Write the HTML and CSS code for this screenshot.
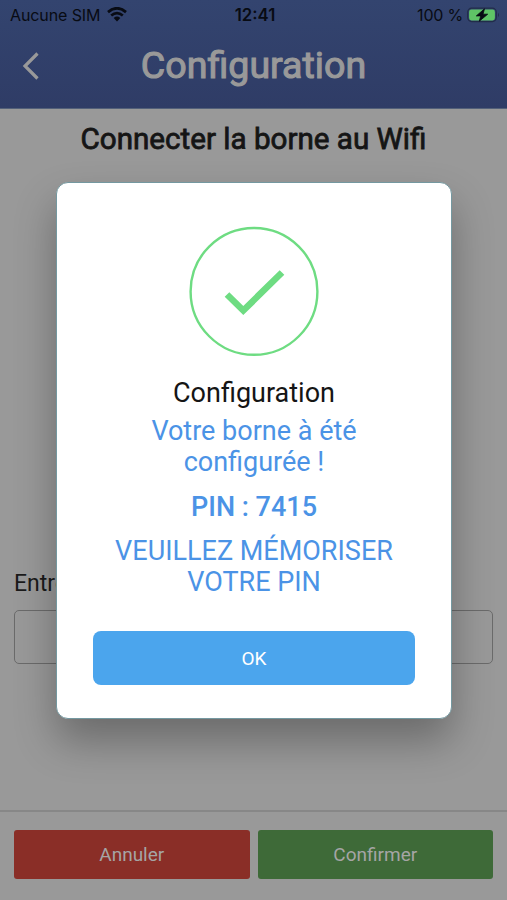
FILE: index.html
```html
<!DOCTYPE html>
<html lang="fr">
<head>
<meta charset="utf-8">
<meta name="viewport" content="width=device-width, initial-scale=1">
<title>Configuration</title>
<link rel="stylesheet" href="styles.css">
</head>
<body>
<div class="screen">
  <header class="header">
    <div class="status">
      <div class="status-left"><span class="carrier">Aucune SIM</span>
        <svg class="wifi" width="20" height="15" viewBox="0 0 20 15"><g fill="none" stroke="#080b13" stroke-width="2.7"><path d="M1 5.1Q10 -2.6 19 5.1"/><path d="M4.2 8.5Q10 3.6 15.8 8.5"/></g><path d="M6.7 11Q10 8.2 13.3 11L10 14.4Z" fill="#080b13"/></svg>
      </div>
      <span class="clock">12:41</span>
      <div class="status-right"><span class="percent">100 %</span>
        <svg class="battery" width="33" height="16" viewBox="0 0 33 16"><rect x=".7" y="1.2" width="28.6" height="13.4" rx="4" fill="none" stroke="#222c4a" stroke-width="1.2"/><rect x="2.1" y="2.5" width="25.8" height="11" rx="2.4" fill="#5fc466"/><path d="M31 5.8Q33 8 31 10.2Z" fill="#222c4a"/><path d="M17.5 1.8L9.3 8.9H13.7L12.3 14.2L20.7 7.2H16Z" fill="#080b13" stroke="#080b13" stroke-width=".8"/></svg>
      </div>
    </div>
    <div class="nav">
      <svg class="back" width="18" height="28" viewBox="0 0 18 28"><path d="M15.5 1.5L3 14L15.5 26.5" fill="none" stroke="#999" stroke-width="3.2"/></svg>
      <h1 class="title">Configuration</h1>
    </div>
  </header>
  <main class="content">
    <h2 class="subtitle">Connecter la borne au Wifi</h2>
    <div class="field">
      <label for="wifi-input">Entrer</label>
      <input id="wifi-input" type="text">
    </div>
  </main>
  <footer class="footer">
    <button class="action cancel">Annuler</button>
    <button class="action confirm">Confirmer</button>
  </footer>
  <section class="modal" role="dialog">
    <svg class="check" width="130" height="130" viewBox="0 0 130 130"><circle cx="65" cy="65.4" r="63.4" fill="none" stroke="#6edc82" stroke-width="2.4"/><path d="M38 68.5L54.3 84.5L93 46.5" fill="none" stroke="#6edc82" stroke-width="6.6"/></svg>
    <p class="modal-title">Configuration</p>
    <p class="message">Votre borne à été<br>configurée !</p>
    <p class="message pin">PIN : 7415</p>
    <p class="message caps">VEUILLEZ MÉMORISER<br>VOTRE PIN</p>
    <button class="ok">OK</button>
  </section>
</div>
</body>
</html>
```
FILE: styles.css
```css
* { box-sizing: border-box; }
body { margin: 0; font-family: Roboto, sans-serif; }
h1, h2, p { margin: 0; font-weight: 400; }
svg { display: block; }
button { font: inherit; border: 0; padding: 0; }
.screen { position: relative; display: flex; flex-direction: column; height: 900px; overflow: hidden; background: #999; }
.header { height: 109px; background: linear-gradient(#33446f, #2f3c66); border-bottom: 1px solid #536079; }
.status { display: grid; grid-template-columns: 1fr auto 1fr; align-items: center; height: 29px; padding: 0 7px 0 10px; font-family: Inter, sans-serif; font-size: 16px; color: #080b13; }
.status-left, .status-right { display: flex; align-items: center; }
.status-left { gap: 7px; }
.status-right { justify-content: flex-end; gap: 4px; }
.carrier { letter-spacing: -.1px; }
.percent { letter-spacing: -.2px; }
.clock { font-weight: 600; font-size: 16.8px; }
.nav { display: grid; grid-template-columns: 60px 1fr 60px; align-items: center; height: 73px; }
.back { margin-left: 22px; }
.title { text-align: center; margin-top: -1px; font-size: 37.6px; line-height: 43px; color: #999; -webkit-text-stroke: 1.1px #999; }
.content { flex: 1; display: flex; flex-direction: column; justify-content: space-between; padding: 12px 14px 146px; }
.subtitle { text-align: center; font-size: 29.6px; line-height: 36px; color: #151515; -webkit-text-stroke: .8px #151515; }
.field { display: flex; flex-direction: column; gap: 11px; }
.field label { font-size: 23px; line-height: 30px; color: #1a1a1a; }
.field input { width: 100%; height: 54px; border: 1.5px solid #6b6b6b; border-radius: 5px; background: transparent; }
.footer { display: flex; gap: 8px; height: 90px; padding: 18px 14px 22px; border-top: 2px solid #878787; }
.action { flex: 1; height: 49px; border-radius: 3px; font-size: 19px; color: #a5a5a5; }
.cancel { background: #8a2e27; }
.confirm { background: #3e6a38; }
.modal { position: absolute; left: 56px; top: 182px; width: 396px; height: 537px; display: flex; flex-direction: column; align-items: center; padding: 43px 36px 33px; border: 1px solid #7498a0; border-radius: 12px; background: #fff; box-shadow: 0 22px 42px rgba(0, 0, 0, .3); }
.modal-title { margin-top: 20px; font-size: 27px; line-height: 34px; color: #151515; }
.message { text-align: center; font-size: 27px; line-height: 31px; color: #4b93e6; }
.modal-title + .message { margin-top: 6px; }
.pin { margin: 14px 0 13px; font-weight: 500; }
.ok { width: 322px; height: 54px; margin-top: auto; border-radius: 8px; background: #4ba5ed; color: #fff; font-size: 19px; }
```
